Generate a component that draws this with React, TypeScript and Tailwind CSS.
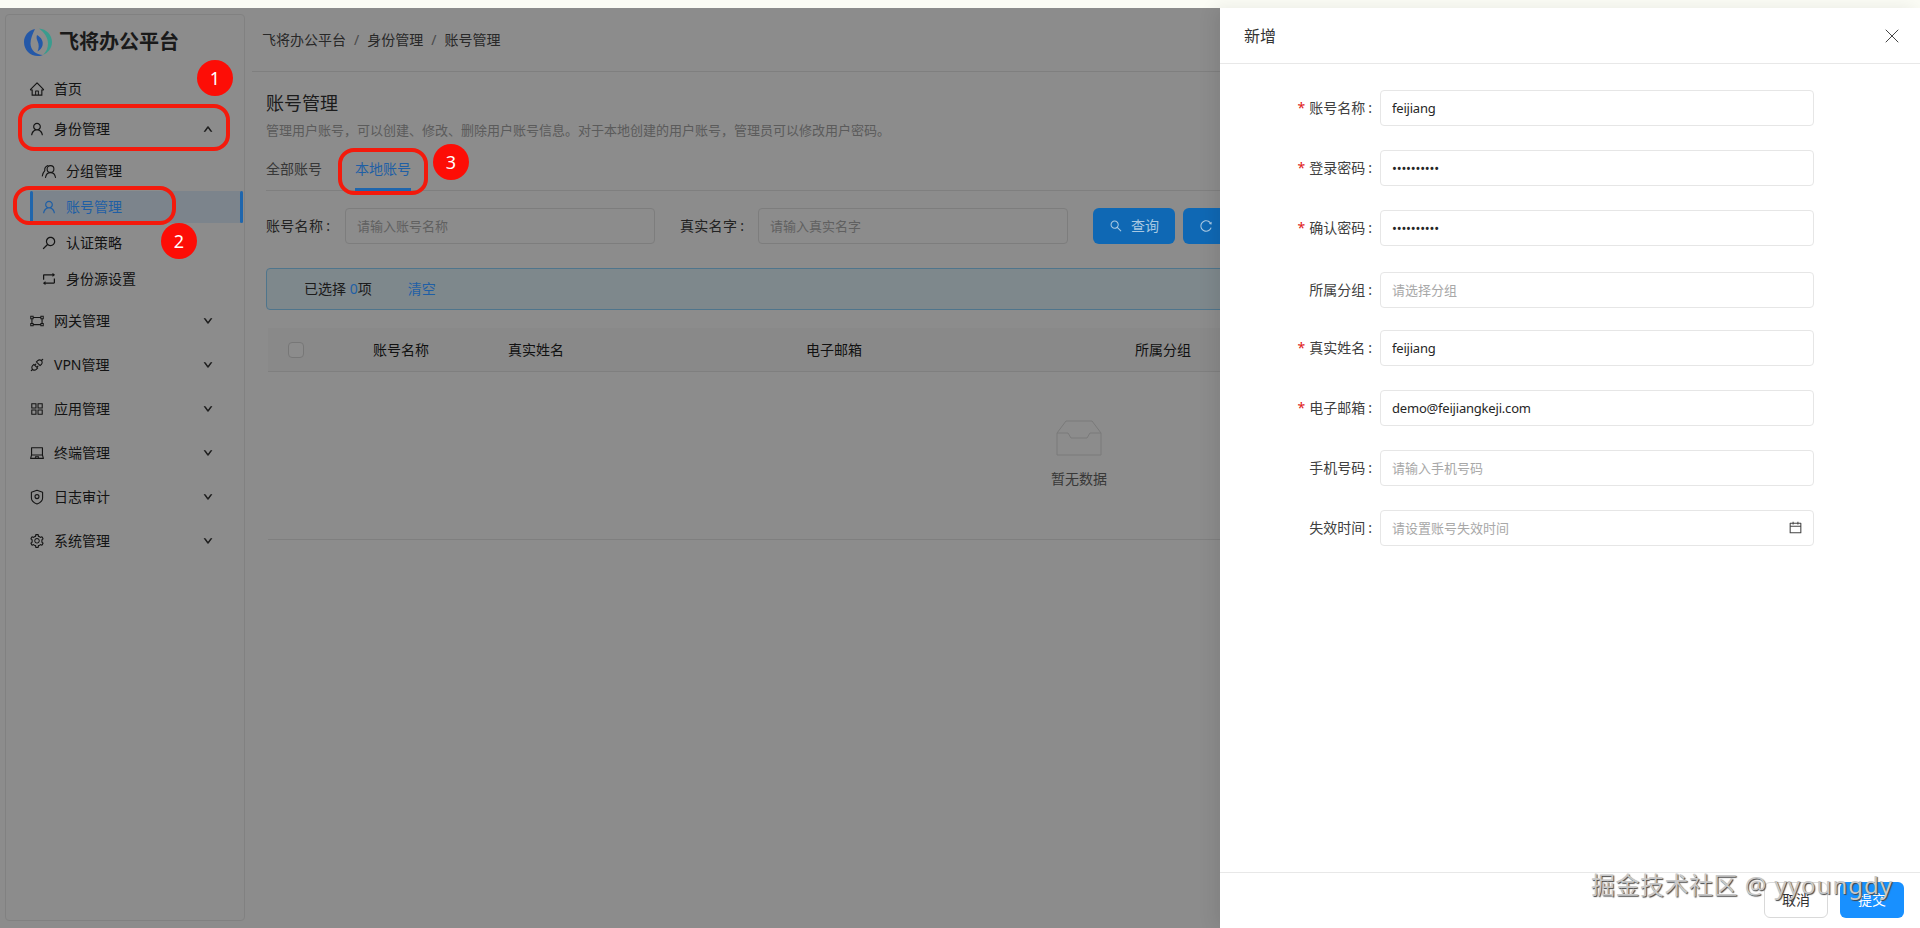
import React from 'react';
import { ReactNode } from 'react';
import {
  AiOutlineHome,
  AiOutlineUser,
  AiOutlineSearch,
  AiOutlineRetweet,
  AiOutlineGateway,
  AiOutlineApi,
  AiOutlineAppstore,
  AiOutlineLaptop,
  AiOutlineSetting,
  AiOutlineUp,
  AiOutlineDown,
  AiOutlineCalendar,
  AiOutlineReload,
} from 'react-icons/ai';
import { X } from 'lucide-react';

const ShieldIcon = () => (
  <svg width="16" height="16" viewBox="0 0 16 16" fill="none" stroke="currentColor" strokeWidth="1.1">
    <path d="M8 1.2 L13.6 3.2 V9 C13.6 11.8 10.6 14 8 15 C5.4 14 2.4 11.8 2.4 9 V3.2 Z" strokeLinejoin="round" />
    <circle cx="8" cy="7.6" r="2" />
  </svg>
);

const GroupIcon = () => (
  <svg width="16" height="16" viewBox="0 0 16 16" fill="none" stroke="currentColor" strokeWidth="1.1" strokeLinecap="round">
    <circle cx="9.5" cy="6" r="3.4" />
    <path d="M4.5 14.5 C5 11.5 7 9.6 9.5 9.6 C12 9.6 14 11.5 14.5 14.5" />
    <path d="M7 2.6 C4.5 3.6 3.5 6 3.8 7.6 C2.5 9 1.5 11 1.3 13" />
  </svg>
);

const Logo = () => (
  <svg className="relative z-10" width="28" height="28" viewBox="0 0 28 28">
    <path d="M11 1 C4 2.5 0 8 0 14 C0 22 6 28 14 28 C16 28 18 27.5 19 27 C12 27 6.5 22 6.5 15.5 C6.5 11 8.5 6 11 1 Z" fill="#2458a8" />
    <path d="M15 0.5 C22.5 1 28 7 28 14 C28 20 24 25 19 27 C22.5 23.5 24 20 24 15.5 C24 9.5 20 4 15 0.5 Z" fill="#3a9c8e" />
    <path d="M13 7 C17.5 9.5 19.5 13.5 18.5 17.5 C17.8 20 16 22 13.5 23.5 C15 20 15.2 16.5 13.5 13 C12.5 11 12.3 9 13 7 Z" fill="#2458a8" />
  </svg>
);

const Badge = ({ className, children }: { className: string; children: ReactNode }) => (
  <div className={`absolute z-30 flex h-9 w-9 items-center justify-center rounded-full bg-[#fd0d06] text-lg text-white ${className}`}>
    {children}
  </div>
);

const TopItem = ({ icon, label, open, arrow, tall }: { icon: ReactNode; label: string; open?: boolean; arrow?: boolean; tall?: boolean }) => (
  <div className={`flex items-center pl-[23px] pr-[31px] text-sm text-[#262626] ${tall ? 'h-11' : 'h-10'}`}>
    <span className="flex w-[25px] text-base">{icon}</span>
    <span>{label}</span>
    {arrow && (
      <span className="ml-auto text-[10px]">
        {open ? <AiOutlineUp strokeWidth={80} /> : <AiOutlineDown strokeWidth={80} />}
      </span>
    )}
  </div>
);

const SubItem = ({ icon, label, active }: { icon: ReactNode; label: string; active?: boolean }) => (
  <div className={`relative ml-[24px] mr-px flex h-8 items-center pl-[11px] text-sm ${active ? 'bg-[#e2f0ff]' : 'text-[#262626]'}`}>
    {active && <span className="absolute left-0 top-0 z-10 h-8 w-[3px] rounded-sm bg-[#1f66ad]" />}
    {active && <span className="absolute right-0 top-0 z-10 h-8 w-[3px] rounded-sm bg-[#1f66ad]" />}
    <span className={`flex w-[25px] text-base ${active ? 'relative z-10 text-[#1f5fa5]' : ''}`}>{icon}</span>
    <span className={active ? 'relative z-10 text-[#1f5fa5]' : ''}>{label}</span>
  </div>
);

const fields = [
  { label: '账号名称', required: true, value: 'feijiang', cls: 'mb-6' },
  { label: '登录密码', required: true, value: 'feijiang12', type: 'password', cls: 'mb-6' },
  { label: '确认密码', required: true, value: 'feijiang12', type: 'password', cls: 'mb-[26px]' },
  { label: '所属分组', placeholder: '请选择分组', cls: 'mb-[22px]' },
  { label: '真实姓名', required: true, value: 'feijiang', cls: 'mb-6' },
  { label: '电子邮箱', required: true, value: 'demo@feijiangkeji.com', cls: 'mb-6' },
  { label: '手机号码', placeholder: '请输入手机号码', cls: 'mb-6' },
  { label: '失效时间', placeholder: '请设置账号失效时间', calendar: true, cls: 'mb-6' },
];

export default function App() {
  return (
    <div className="relative h-[928px] w-[1920px] overflow-hidden bg-white font-['Noto_Sans','Noto_Sans_CJK_SC',sans-serif]">
      <div className="h-2 bg-[#fbfcf5]" />

      <div className="flex h-[920px]">
        {/* sidebar */}
        <aside className="mb-[7px] ml-[5px] mt-[6px] w-[240px] shrink-0 rounded-sm border border-[#ececec] bg-white">
          <div className="flex h-[54px] items-center pl-[18px]">
            <Logo />
            <span className="ml-[7px] text-xl font-bold text-[#303030]">飞将办公平台</span>
          </div>
          <TopItem icon={<AiOutlineHome />} label="首页" />
          <TopItem icon={<AiOutlineUser />} label="身份管理" arrow open />
          <div className="mb-1 mt-1.5 flex flex-col gap-1">
            <SubItem icon={<GroupIcon />} label="分组管理" />
            <SubItem icon={<AiOutlineUser />} label="账号管理" active />
            <SubItem icon={<AiOutlineSearch className="-scale-x-100" />} label="认证策略" />
            <SubItem icon={<AiOutlineRetweet />} label="身份源设置" />
          </div>
          <TopItem icon={<AiOutlineGateway />} label="网关管理" arrow tall />
          <TopItem icon={<AiOutlineApi />} label="VPN管理" arrow tall />
          <TopItem icon={<AiOutlineAppstore />} label="应用管理" arrow tall />
          <TopItem icon={<AiOutlineLaptop />} label="终端管理" arrow tall />
          <TopItem icon={<ShieldIcon />} label="日志审计" arrow tall />
          <TopItem icon={<AiOutlineSetting />} label="系统管理" arrow tall />
        </aside>

        {/* main */}
        <main className="min-w-0 flex-1">
          <div className="ml-[7px] mt-[6px] flex h-[58px] items-center border-b border-[#e8e8e8] pb-1.5 pl-[10px] text-sm text-[#4a4a4a]">
            飞将办公平台
            <span className="mx-2 text-[#888]">/</span>
            身份管理
            <span className="mx-2 text-[#888]">/</span>
            账号管理
          </div>

          <div className="ml-[21px] mr-[28px]">
            <h1 className="mt-[19px] text-lg font-normal leading-[24px] text-[#333]">账号管理</h1>
            <p className="mt-[6px] text-[13px] leading-[18px] text-[#a6a6a6]">
              管理用户账号，可以创建、修改、删除用户账号信息。对于本地创建的用户账号，管理员可以修改用户密码。
            </p>

            <div className="mt-[9px] flex h-[43px] items-center gap-[33px] border-b border-[#e8e8e8] text-sm text-[#666]">
              <span>全部账号</span>
              <span className="relative z-10 flex h-full items-center text-[#1f5fa5]">
                本地账号
                <span className="absolute -bottom-px left-0 h-[3px] w-full bg-[#1f66ad]" />
              </span>
            </div>

            <div className="mt-[17px] flex items-center text-sm text-[#404040]">
              <label className="w-[79px] tracking-[0.3px]">
                账号名称<span className="ml-[3px]">:</span>
              </label>
              <input
                readOnly
                placeholder="请输入账号名称"
                className="h-9 w-[310px] rounded border border-[#e4e4e4] bg-white px-[11px] text-[13px] placeholder:text-[#b0b0b0]"
              />
              <label className="ml-[25px] w-[78px] tracking-[0.3px]">
                真实名字<span className="ml-[3px]">:</span>
              </label>
              <input
                readOnly
                placeholder="请输入真实名字"
                className="h-9 w-[310px] rounded border border-[#e4e4e4] bg-white px-[11px] text-[13px] placeholder:text-[#b0b0b0]"
              />
              <button className="relative z-10 ml-[25px] flex h-9 w-[82px] items-center justify-center gap-2 rounded-md bg-[#0f68b4] text-sm text-[#a9c8e2]">
                <AiOutlineSearch />
                查询
              </button>
              <button className="relative z-10 ml-2 flex h-9 w-[82px] items-center justify-center gap-2 rounded-md bg-[#0f68b4] text-sm text-[#a9c8e2]">
                <AiOutlineReload />
                重置
              </button>
            </div>

            <div className="mt-6 flex h-[42px] items-center rounded border border-[#91d5ff] bg-[#e6f7ff] pl-[37px] text-sm text-[#333]">
              已选择&nbsp;<span className="relative z-10 text-[#1f5fa5]">0</span>项
              <span className="relative z-10 ml-[36px] text-[#1f5fa5]">清空</span>
            </div>

            <div className="mx-[2px] mt-[18px] grid h-11 grid-cols-[56px_154px_116px_480px_178px_1fr] items-center border-b border-[#e8e8e8] bg-[#fafafa] text-center text-sm text-[#1f1f1f]">
              <span className="ml-[20px] h-4 w-4 rounded-sm border border-[#d9d9d9] bg-white" />
              <span>账号名称</span>
              <span>真实姓名</span>
              <span>电子邮箱</span>
              <span>所属分组</span>
              <span />
            </div>
            <div className="mx-[2px] flex h-[168px] flex-col items-center border-b border-[#e8e8e8] pt-[48px]">
              <svg width="46" height="36" viewBox="0 0 46 36" fill="none" stroke="#dedede" strokeWidth="1">
                <path d="M1 13 L10 1 H36 L45 13 V35 H1 Z" />
                <path d="M1 13 H12 L15 18 H31 L34 13 H45" />
              </svg>
              <span className="mt-[13px] text-sm text-[#666]">暂无数据</span>
            </div>
          </div>
        </main>
      </div>

      {/* mask */}
      <div className="absolute inset-x-0 bottom-0 top-2 bg-black/45" />

      {/* drawer */}
      <div className="absolute bottom-0 right-0 top-2 z-20 flex w-[700px] flex-col bg-white shadow-[-6px_0_16px_rgba(0,0,0,0.08)]">
        <div className="flex h-[56px] shrink-0 items-center justify-between border-b border-[#e8e8e8] pl-6 pr-4">
          <span className="text-base text-[#333]">新增</span>
          <X size={24} strokeWidth={1} className="text-[#444]" />
        </div>
        <div className="flex-1 pt-[26px]">
          {fields.map((f) => (
            <div key={f.label} className={`flex h-9 items-center ${f.cls}`}>
              <label className="flex w-[152px] items-center justify-end text-sm text-[#404040]">
                {f.required && <span className="mr-1 text-[#e02020]">*</span>}
                {f.label}
                <span className="ml-[3px]">:</span>
              </label>
              <div className="relative ml-2 w-[434px]">
                <input
                  readOnly
                  type={f.type ?? 'text'}
                  value={f.value}
                  placeholder={f.placeholder}
                  className={`h-9 w-full rounded border border-[#e6e6e6] bg-white px-[11px] text-[13px] text-[#262626] placeholder:text-[#a8a8a8] ${
                    f.value ? 'tracking-[-0.2px]' : ''
                  }`}
                />
                {f.calendar && <AiOutlineCalendar className="absolute right-[11px] top-[10px] text-[15px] text-[#444]" />}
              </div>
            </div>
          ))}
        </div>
        <div className="flex h-[56px] shrink-0 justify-end gap-3 border-t border-[#e8e8e8] pr-4 pt-[9px]">
          <button className="h-9 w-16 rounded-md border border-[#d9d9d9] bg-white text-sm text-[#333]">取消</button>
          <button className="h-9 w-16 rounded-md bg-[#1890ff] text-sm text-white">提交</button>
        </div>
      </div>

      {/* annotations over the screenshot */}
      <div className="absolute left-[18px] top-[104px] z-30 h-[47px] w-[212px] rounded-2xl border-4 border-[#f41a0c]" />
      <div className="absolute left-[13px] top-[186px] z-30 h-[39px] w-[163px] rounded-2xl border-4 border-[#f41a0c]" />
      <div className="absolute left-[338px] top-[148px] z-30 h-[47px] w-[90px] rounded-2xl border-4 border-[#f41a0c]" />
      <Badge className="left-[197px] top-[60px]">1</Badge>
      <Badge className="left-[161px] top-[223px]">2</Badge>
      <Badge className="left-[433px] top-[144px]">3</Badge>

      <div className="absolute left-[1591px] top-[868px] z-30 text-2xl leading-[34px] tracking-[0.5px] text-[#c8c8c8] [text-shadow:1px_1px_1px_#444]">
        掘金技术社区 <span className="tracking-[1px]">@ yyoungdy</span>
      </div>
    </div>
  );
}
